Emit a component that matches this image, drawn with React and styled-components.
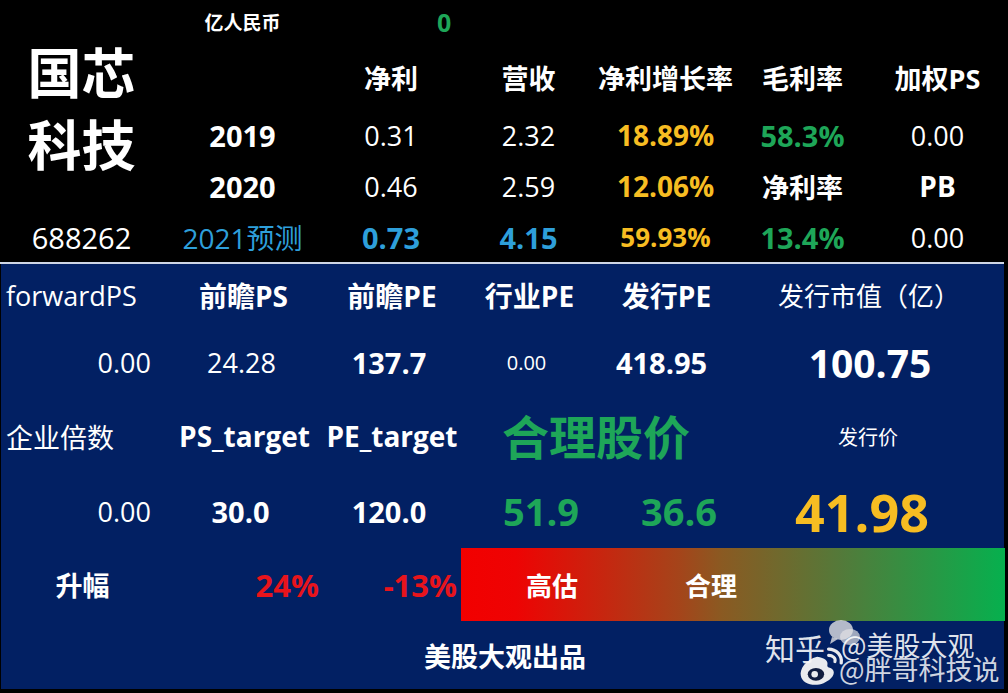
import React from "react";
import styled, { createGlobalStyle } from "styled-components";

const GlobalStyle = createGlobalStyle`
  html, body {
    margin: 0;
    padding: 0;
    background: #000;
  }
  body {
    font-family: "Open Sans", "Noto Sans CJK SC", sans-serif;
    color: #fff;
  }
`;

const COLS = "163px 159px 138px 137px 137px 137px 133px";

const colors = {
  white: "#ffffff",
  gold: "#f7bd22",
  green: "#1ea658",
  blue: "#2e9fda",
  red: "#e8141c",
};

const Sheet = styled.div`
  width: 1008px;
  height: 693px;
  background: #000;
  overflow: hidden;
`;

const TopTable = styled.div`
  display: grid;
  grid-template-columns: ${COLS};
  grid-template-rows: 44px 66px 50px 52px 50px;
`;

const Divider = styled.div`
  width: 1004px;
  height: 2px;
  background: #cfd6e6;
`;

const BottomTable = styled.div`
  position: relative;
  display: grid;
  grid-template-columns: ${COLS};
  grid-template-rows: 62px 72px 76px 74px 73px 68px;
  width: 1003px;
  margin-left: 1px;
  background: #022063;
`;

const Cell = styled.div`
  display: flex;
  align-items: center;
  justify-content: ${(p) =>
    p.$align === "left" ? "flex-start" : p.$align === "right" ? "flex-end" : "center"};
  padding: ${(p) => p.$pad || "0"};
  font-size: ${(p) => p.$size || 27}px;
  font-weight: ${(p) => (p.$bold ? 700 : 400)};
  color: ${(p) => colors[p.$color || "white"]};
  white-space: nowrap;
  grid-column: ${(p) => p.$col || "auto"};
  grid-row: ${(p) => p.$row || "auto"};
`;

const Title = styled.div`
  grid-column: 1;
  grid-row: 2 / 5;
  align-self: start;
  margin-top: -9px;
  display: flex;
  flex-direction: column;
  align-items: center;
  font-family: "Noto Sans CJK SC", sans-serif;
  font-size: 54px;
  font-weight: 700;
  line-height: 72px;
`;

const GradientBar = styled.div`
  grid-column: 4 / 8;
  grid-row: 5;
  display: flex;
  align-items: center;
  gap: 107px;
  padding-left: 65px;
  background: linear-gradient(90deg, #f20000 0%, #ee0303 10%, #a5441a 40%, #8a5a22 48%, #537a3a 70%, #06b04e 100%);
  font-size: 26px;
  font-weight: 700;
`;

const Watermark = styled.div`
  position: absolute;
  left: 764px;
  top: 368px;
  width: 240px;
  height: 58px;
  font-family: "Noto Sans CJK SC", sans-serif;
  font-size: 27px;
  pointer-events: none;
`;

const MarkLine = styled.div`
  position: absolute;
  left: ${(p) => p.$x}px;
  top: ${(p) => p.$y}px;
  font-size: ${(p) => p.$size || 27}px;
  white-space: nowrap;
  line-height: 30px;
  color: ${(p) => p.$tone || "rgba(255,255,255,0.88)"};
`;

const MarkIcon = styled.svg`
  position: absolute;
  left: ${(p) => p.$x}px;
  top: ${(p) => p.$y}px;
`;

const App = () => {
  return (
    <>
      <GlobalStyle />
      <Sheet>
        <TopTable>
          <Cell $col="2" $row="1" $size={19} $bold>亿人民币</Cell>
          <Cell $col="3" $row="1" $size={25} $bold $color="green" $pad="0 0 0 115px" $align="left">0</Cell>

          <Title>
            <span>国芯</span>
            <span>科技</span>
          </Title>

          <Cell $col="3" $row="2" $bold>净利</Cell>
          <Cell $col="4" $row="2" $bold>营收</Cell>
          <Cell $col="5" $row="2" $bold>净利增长率</Cell>
          <Cell $col="6" $row="2" $bold>毛利率</Cell>
          <Cell $col="7" $row="2" $bold>加权PS</Cell>

          <Cell $col="2" $row="3" $bold $size={29}>2019</Cell>
          <Cell $col="3" $row="3">0.31</Cell>
          <Cell $col="4" $row="3">2.32</Cell>
          <Cell $col="5" $row="3" $bold $color="gold" $size={28}>18.89%</Cell>
          <Cell $col="6" $row="3" $bold $color="green" $size={29}>58.3%</Cell>
          <Cell $col="7" $row="3">0.00</Cell>

          <Cell $col="2" $row="4" $bold $size={29}>2020</Cell>
          <Cell $col="3" $row="4">0.46</Cell>
          <Cell $col="4" $row="4">2.59</Cell>
          <Cell $col="5" $row="4" $bold $color="gold" $size={28}>12.06%</Cell>
          <Cell $col="6" $row="4" $bold>净利率</Cell>
          <Cell $col="7" $row="4" $bold $size={28}>PB</Cell>

          <Cell $col="1" $row="5" $size={29}>688262</Cell>
          <Cell $col="2" $row="5" $color="blue" $size={28}>2021预测</Cell>
          <Cell $col="3" $row="5" $bold $color="blue" $size={29}>0.73</Cell>
          <Cell $col="4" $row="5" $bold $color="blue" $size={29}>4.15</Cell>
          <Cell $col="5" $row="5" $bold $color="gold" $size={26}>59.93%</Cell>
          <Cell $col="6" $row="5" $bold $color="green" $size={29}>13.4%</Cell>
          <Cell $col="7" $row="5">0.00</Cell>
        </TopTable>

        <Divider />

        <BottomTable>
          <Cell $col="1" $row="1" $align="left" $pad="0 0 0 5px">forwardPS</Cell>
          <Cell $col="2" $row="1" $bold $size={28}>前瞻PS</Cell>
          <Cell $col="3" $row="1" $bold $size={28}>前瞻PE</Cell>
          <Cell $col="4" $row="1" $bold $size={28}>行业PE</Cell>
          <Cell $col="5" $row="1" $bold $size={28}>发行PE</Cell>
          <Cell $col="6 / 8" $row="1" $size={26} $pad="0 2px 0 0">发行市值（亿）</Cell>

          <Cell $col="1" $row="2" $align="right" $pad="0 13px 0 0">0.00</Cell>
          <Cell $col="2" $row="2" $pad="0 4px 0 0">24.28</Cell>
          <Cell $col="3" $row="2" $bold $size={29} $pad="0 6px 0 0">137.7</Cell>
          <Cell $col="4" $row="2" $size={20} $pad="0 6px 0 0">0.00</Cell>
          <Cell $col="5" $row="2" $bold $size={29} $pad="0 10px 0 0">418.95</Cell>
          <Cell $col="6 / 8" $row="2" $bold $size={39}>100.75</Cell>

          <Cell $col="1" $row="3" $align="left" $pad="0 0 0 5px">企业倍数</Cell>
          <Cell $col="2" $row="3" $bold $size={28} $pad="0 0 0 2px">PS_target</Cell>
          <Cell $col="3" $row="3" $bold $size={28}>PE_target</Cell>
          <Cell $col="4 / 6" $row="3" $bold $size={47} $color="green" $pad="0 4px 4px 0">合理股价</Cell>
          <Cell $col="6 / 8" $row="3" $size={20} $pad="0 4px 0 0">发行价</Cell>

          <Cell $col="1" $row="4" $align="right" $pad="0 13px 0 0">0.00</Cell>
          <Cell $col="2" $row="4" $bold $size={29} $pad="0 6px 0 0">30.0</Cell>
          <Cell $col="3" $row="4" $bold $size={29} $pad="0 6px 0 0">120.0</Cell>
          <Cell $col="4" $row="4" $bold $size={38} $color="green" $align="right" $pad="0 19px 0 0">51.9</Cell>
          <Cell $col="5" $row="4" $bold $size={38} $color="green" $align="right" $pad="0 18px 0 0">36.6</Cell>
          <Cell $col="6 / 8" $row="4" $bold $size={52} $color="gold" $pad="0 16px 0 0">41.98</Cell>

          <Cell $col="1" $row="5" $bold>升幅</Cell>
          <Cell $col="2" $row="5" $bold $size={31} $color="red" $align="right" $pad="0 4px 0 0">24%</Cell>
          <Cell $col="3" $row="5" $bold $size={31} $color="red" $align="right" $pad="0 4px 0 0">-13%</Cell>
          <GradientBar>
            <span>高估</span>
            <span>合理</span>
          </GradientBar>

          <Cell $col="3 / 6" $row="6" $bold $align="left" $pad="0 0 0 101px">美股大观出品</Cell>

          <Watermark>
            <MarkLine $x={0} $y={0} $size={30}>知乎</MarkLine>
            <MarkIcon $x={62} $y={-14} width="34" height="30" viewBox="0 0 34 30">
              <ellipse cx="14" cy="12" rx="12" ry="10" fill="rgba(225,225,228,0.8)" />
              <path d="M5 19 L3 26 L11 21 Z" fill="rgba(225,225,228,0.8)" />
              <ellipse cx="23" cy="19" rx="10" ry="8" fill="rgba(225,225,228,0.7)" />
            </MarkIcon>
            <MarkIcon $x={32} $y={14} width="48" height="44" viewBox="0 0 38 34">
              <path d="M16 8 C7 10 2 18 3 23 C4 30 14 32 21 29 C28 26 31 21 28 18 C26 16 24 17 24 15 C25 11 22 9 16 8 Z" fill="rgba(245,245,245,0.95)" />
              <ellipse cx="15" cy="22" rx="6.5" ry="5" fill="#101c3e" />
              <circle cx="14" cy="22" r="2.6" fill="rgba(245,245,245,0.95)" />
              <path d="M25 2 C31 2 36 7 35 13" stroke="rgba(245,245,245,0.95)" strokeWidth="2.6" fill="none" strokeLinecap="round" />
              <path d="M25 7 C28 7 31 9 30 12" stroke="rgba(245,245,245,0.95)" strokeWidth="2.4" fill="none" strokeLinecap="round" />
            </MarkIcon>
            <MarkLine $x={76} $y={-2}>@美股大观</MarkLine>
            <MarkLine $x={74} $y={22} $tone="rgba(255,255,255,0.82)">@胖哥科技说</MarkLine>
          </Watermark>
        </BottomTable>
      </Sheet>
    </>
  );
};

export default App;
